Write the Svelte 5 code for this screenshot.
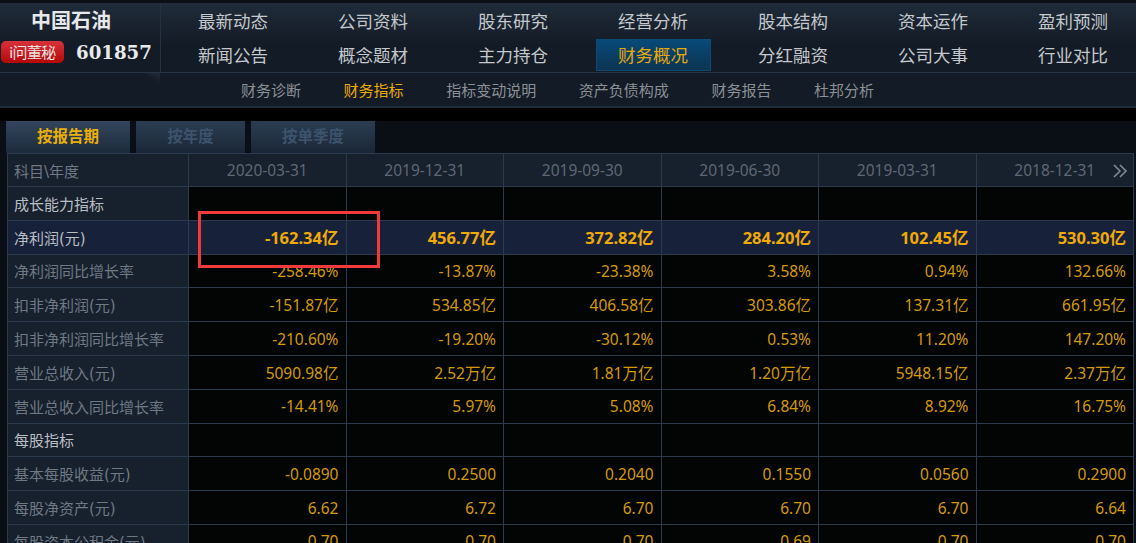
<script lang="ts">
	const navRows = [
		['最新动态', '公司资料', '股东研究', '经营分析', '股本结构', '资本运作', '盈利预测'],
		['新闻公告', '概念题材', '主力持仓', '财务概况', '分红融资', '公司大事', '行业对比']
	];
	const subNav = ['财务诊断', '财务指标', '指标变动说明', '资产负债构成', '财务报告', '杜邦分析'];
	const tabs = ['按报告期', '按年度', '按单季度'];
	const dates = ['2020-03-31', '2019-12-31', '2019-09-30', '2019-06-30', '2019-03-31', '2018-12-31'];

	const rows = [
		{ label: '成长能力指标', kind: 'section', values: ['', '', '', '', '', ''] },
		{ label: '净利润(元)', kind: 'hot', values: ['-162.34亿', '456.77亿', '372.82亿', '284.20亿', '102.45亿', '530.30亿'] },
		{ label: '净利润同比增长率', kind: '', values: ['-258.46%', '-13.87%', '-23.38%', '3.58%', '0.94%', '132.66%'] },
		{ label: '扣非净利润(元)', kind: '', values: ['-151.87亿', '534.85亿', '406.58亿', '303.86亿', '137.31亿', '661.95亿'] },
		{ label: '扣非净利润同比增长率', kind: '', values: ['-210.60%', '-19.20%', '-30.12%', '0.53%', '11.20%', '147.20%'] },
		{ label: '营业总收入(元)', kind: '', values: ['5090.98亿', '2.52万亿', '1.81万亿', '1.20万亿', '5948.15亿', '2.37万亿'] },
		{ label: '营业总收入同比增长率', kind: '', values: ['-14.41%', '5.97%', '5.08%', '6.84%', '8.92%', '16.75%'] },
		{ label: '每股指标', kind: 'section', values: ['', '', '', '', '', ''] },
		{ label: '基本每股收益(元)', kind: '', values: ['-0.0890', '0.2500', '0.2040', '0.1550', '0.0560', '0.2900'] },
		{ label: '每股净资产(元)', kind: '', values: ['6.62', '6.72', '6.70', '6.70', '6.70', '6.64'] },
		{ label: '每股资本公积金(元)', kind: '', values: ['0.70', '0.70', '0.70', '0.69', '0.70', '0.70'] }
	];
</script>

<div class="page">
	<header class="top">
		<div class="main-bar">
			<div class="brand">
				<div class="name">中国石油</div>
				<div class="code-row">
					<span class="badge">i问董秘</span>
					<span class="code">601857</span>
				</div>
			</div>
			<nav class="nav">
				{#each navRows as navRow}
					{#each navRow as item}
						<span class="nav-item" class:active={item === '财务概况'}>{item}</span>
					{/each}
				{/each}
			</nav>
		</div>
		<div class="sub-bar">
			{#each subNav as item}
				<span class="sub-item" class:current={item === '财务指标'}>{item}</span>
			{/each}
		</div>
	</header>

	<section class="content">
		<div class="tabs">
			{#each tabs as tab, i}
				<span class="tab" class:selected={i === 0}>{tab}</span>
			{/each}
		</div>
		<table>
			<thead>
				<tr>
					<th class="label">科目\年度</th>
					{#each dates as date, i}
						<th class="date">
							{date}
							{#if i === dates.length - 1}
								<svg class="more" width="16" height="14" viewBox="0 0 16 14" fill="none" stroke="#7f8a97" stroke-width="1.6">
									<path d="M2 1l6 6-6 6M8 1l6 6-6 6" />
								</svg>
							{/if}
						</th>
					{/each}
				</tr>
			</thead>
			<tbody>
				{#each rows as row}
					<tr class={row.kind}>
						<td class="label">{row.label}</td>
						{#each row.values as value}
							<td class="num">{value}</td>
						{/each}
					</tr>
				{/each}
			</tbody>
		</table>
		<div class="mark"></div>
	</section>
</div>

<style>
	:global(body) {
		background: #0a0e15;
	}

	.page {
		height: 543px;
		overflow: hidden;
		font-family: 'Noto Sans', 'Noto Sans CJK SC', sans-serif;
		background: #0a0e15;
	}

	.top {
		margin-top: 2px;
		border-top: 1px solid #0d1218;
		background:
			linear-gradient(157deg, transparent 0 6%, rgba(120, 140, 165, 0.16) 9%, transparent 13%) 0 0 / 160px 106px no-repeat,
			linear-gradient(28deg, transparent 0 58%, rgba(120, 140, 165, 0.12) 62%, transparent 68%) 0 0 / 160px 106px no-repeat,
			#131b26;
		color: #c4c8cc;
	}

	.main-bar {
		display: flex;
		height: 69px;
		border-bottom: 1px solid #263545;
		background: linear-gradient(#202c3a, #131b26 60%);
	}

	.brand {
		width: 161px;
		height: 69px;
		border-right: 1px solid #263140;
		box-sizing: border-box;
		flex: none;
	}

	.name {
		padding: 1px 18px 0 0;
		height: 32px;
		text-align: center;
		font-family: 'Noto Sans CJK SC', sans-serif;
		font-size: 20px;
		line-height: 32px;
		font-weight: 700;
		color: #e6e8ea;
	}

	.code-row {
		display: flex;
		align-items: center;
		gap: 12px;
		padding: 5px 0 0 1px;
	}

	.badge {
		width: 63px;
		height: 22px;
		border-radius: 5px;
		background: linear-gradient(#d8323a, #b50808);
		color: #f0e4e4;
		font-size: 15px;
		line-height: 22px;
		letter-spacing: -0.6px;
		text-align: center;
	}

	.code {
		font-family: 'DejaVu Serif', serif;
		font-size: 18.2px;
		font-weight: 700;
		color: #e8eaec;
	}

	.nav {
		display: grid;
		grid-template-columns: repeat(7, 140px);
		grid-auto-rows: 34px;
		margin: 1px 0 0 2px;
	}

	.nav-item {
		justify-self: center;
		align-self: center;
		font-size: 17.5px;
		line-height: 32px;
		width: 115px;
		height: 32px;
		box-sizing: border-box;
		text-align: center;
	}

	.nav-item.active {
		background: linear-gradient(#074a78, #0d3451);
		border: 1px solid #0e4a74;
		line-height: 30px;
		color: #e8a90e;
	}

	.sub-bar {
		display: flex;
		gap: 42.6px;
		height: 33px;
		padding-left: 241px;
		border-bottom: 2px solid #202c3a;
		font-size: 15px;
		line-height: 35px;
		color: #8b9096;
	}

	.sub-item.current {
		color: #eaa90a;
	}

	.content {
		position: relative;
		margin-top: 12px;
		padding: 0 2px 0 7px;
		border-top: 1px solid #000;
		box-shadow: 0 -12px 0 #000;
	}

	.tabs {
		display: flex;
		gap: 6px;
		height: 32px;
		margin-left: -1px;
	}

	.tab {
		width: 109px;
		background: linear-gradient(#2c3d52, #1a2637);
		color: #3d536c;
		font-size: 15.5px;
		font-weight: 700;
		line-height: 30px;
		text-align: center;
	}

	.tab:last-child {
		width: 124px;
	}

	.tab.selected {
		width: 124px;
		color: #e8b008;
		background: linear-gradient(#33465d, #1d2a3c);
	}

	table {
		width: 1127px;
		border-collapse: collapse;
		table-layout: fixed;
		background: #030504;
	}

	th,
	td {
		height: 33.8px;
		padding: 0;
		border: 1px solid #2c3a4e;
		box-sizing: border-box;
		font-size: 15.5px;
		font-weight: 400;
	}

	th {
		height: 33px;
	}

	.label {
		width: 181px;
		padding-left: 6px;
		text-align: left;
		background: #17202d;
		color: #6f7984;
		font-family: 'DejaVu Sans', 'Noto Sans CJK SC', sans-serif;
		font-size: 15px;
		white-space: nowrap;
	}

	.date {
		position: relative;
		background: #17202d;
		color: #5e6874;
		text-align: center;
	}

	.more {
		position: absolute;
		right: 5px;
		top: 10px;
	}

	.num {
		padding-right: 7px;
		text-align: right;
		color: #d39a06;
	}

	.section .label {
		color: #b9bec3;
	}

	.hot td {
		background: #17223a;
	}

	.hot .label {
		color: #b9bec3;
	}

	.hot .num {
		color: #f0aa08;
		font-size: 16.5px;
		font-weight: 700;
	}

	.mark {
		position: absolute;
		left: 198px;
		top: 90px;
		width: 182px;
		height: 57px;
		border: 3px solid #f33a3a;
		box-sizing: border-box;
	}
</style>
